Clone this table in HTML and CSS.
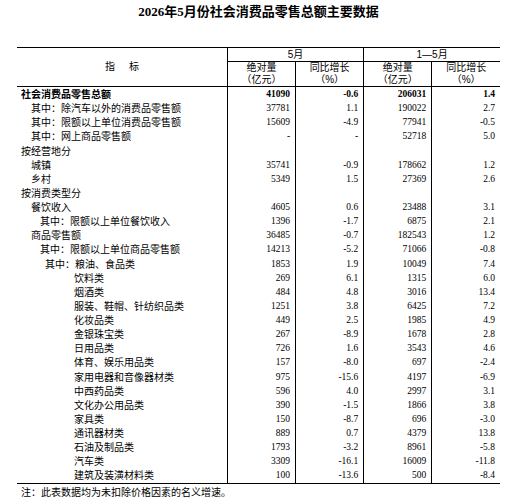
FILE: index.html
```html
<!DOCTYPE html>
<html lang="zh-CN">

<head>
    <meta charset="UTF-8">
    <title>2026年5月份社会消费品零售总额主要数据</title>
    <link rel="stylesheet" href="styles.css">
</head>

<body>
    <h1 class="title">2026年5月份社会消费品零售总额主要数据</h1>

    <table class="data-table">
        <colgroup>
            <col class="col-label">
            <col class="col-num">
            <col class="col-num">
            <col class="col-num">
            <col class="col-num">
        </colgroup>
        <thead>
            <tr class="head-top">
                <th rowspan="2" class="head-label">指&nbsp;&nbsp;&nbsp;&nbsp;&nbsp;标</th>
                <th colspan="2" class="head-group">5月</th>
                <th colspan="2" class="head-group">1—5月</th>
            </tr>
            <tr class="head-sub">
                <th><span class="hl">绝对量</span><span class="hl">（亿元）</span></th>
                <th><span class="hl">同比增长</span><span class="hl">（%）</span></th>
                <th><span class="hl">绝对量</span><span class="hl">（亿元）</span></th>
                <th><span class="hl">同比增长</span><span class="hl">（%）</span></th>
            </tr>
        </thead>
        <tbody>
            <tr class="total">
                <td class="l0">社会消费品零售总额</td>
                <td>41090</td><td>-0.6</td><td>206031</td><td>1.4</td>
            </tr>
            <tr>
                <td class="l1">其中：除汽车以外的消费品零售额</td>
                <td>37781</td><td>1.1</td><td>190022</td><td>2.7</td>
            </tr>
            <tr>
                <td class="l1">其中：限额以上单位消费品零售额</td>
                <td>15609</td><td>-4.9</td><td>77941</td><td>-0.5</td>
            </tr>
            <tr>
                <td class="l1">其中：网上商品零售额</td>
                <td>-</td><td>-</td><td>52718</td><td>5.0</td>
            </tr>
            <tr>
                <td class="l0">按经营地分</td>
                <td></td><td></td><td></td><td></td>
            </tr>
            <tr>
                <td class="l1">城镇</td>
                <td>35741</td><td>-0.9</td><td>178662</td><td>1.2</td>
            </tr>
            <tr>
                <td class="l1">乡村</td>
                <td>5349</td><td>1.5</td><td>27369</td><td>2.6</td>
            </tr>
            <tr>
                <td class="l0">按消费类型分</td>
                <td></td><td></td><td></td><td></td>
            </tr>
            <tr>
                <td class="l1">餐饮收入</td>
                <td>4605</td><td>0.6</td><td>23488</td><td>3.1</td>
            </tr>
            <tr>
                <td class="l2">其中：限额以上单位餐饮收入</td>
                <td>1396</td><td>-1.7</td><td>6875</td><td>2.1</td>
            </tr>
            <tr>
                <td class="l1">商品零售额</td>
                <td>36485</td><td>-0.7</td><td>182543</td><td>1.2</td>
            </tr>
            <tr>
                <td class="l2">其中：限额以上单位商品零售额</td>
                <td>14213</td><td>-5.2</td><td>71066</td><td>-0.8</td>
            </tr>
            <tr>
                <td class="l3">其中：粮油、食品类</td>
                <td>1853</td><td>1.9</td><td>10049</td><td>7.4</td>
            </tr>
            <tr>
                <td class="l4">饮料类</td>
                <td>269</td><td>6.1</td><td>1315</td><td>6.0</td>
            </tr>
            <tr>
                <td class="l4">烟酒类</td>
                <td>484</td><td>4.8</td><td>3016</td><td>13.4</td>
            </tr>
            <tr>
                <td class="l4">服装、鞋帽、针纺织品类</td>
                <td>1251</td><td>3.8</td><td>6425</td><td>7.2</td>
            </tr>
            <tr>
                <td class="l4">化妆品类</td>
                <td>449</td><td>2.5</td><td>1985</td><td>4.9</td>
            </tr>
            <tr>
                <td class="l4">金银珠宝类</td>
                <td>267</td><td>-8.9</td><td>1678</td><td>2.8</td>
            </tr>
            <tr>
                <td class="l4">日用品类</td>
                <td>726</td><td>1.6</td><td>3543</td><td>4.6</td>
            </tr>
            <tr>
                <td class="l4">体育、娱乐用品类</td>
                <td>157</td><td>-8.0</td><td>697</td><td>-2.4</td>
            </tr>
            <tr>
                <td class="l4">家用电器和音像器材类</td>
                <td>975</td><td>-15.6</td><td>4197</td><td>-6.9</td>
            </tr>
            <tr>
                <td class="l4">中西药品类</td>
                <td>596</td><td>4.0</td><td>2997</td><td>3.1</td>
            </tr>
            <tr>
                <td class="l4">文化办公用品类</td>
                <td>390</td><td>-1.5</td><td>1866</td><td>3.8</td>
            </tr>
            <tr>
                <td class="l4">家具类</td>
                <td>150</td><td>-8.7</td><td>696</td><td>-3.0</td>
            </tr>
            <tr>
                <td class="l4">通讯器材类</td>
                <td>889</td><td>0.7</td><td>4379</td><td>13.8</td>
            </tr>
            <tr>
                <td class="l4">石油及制品类</td>
                <td>1793</td><td>-3.2</td><td>8961</td><td>-5.8</td>
            </tr>
            <tr>
                <td class="l4">汽车类</td>
                <td>3309</td><td>-16.1</td><td>16009</td><td>-11.8</td>
            </tr>
            <tr>
                <td class="l4">建筑及装潢材料类</td>
                <td>100</td><td>-13.6</td><td>500</td><td>-8.4</td>
            </tr>
        </tbody>
    </table>

    <p class="note">注：此表数据均为未扣除价格因素的名义增速。</p>
</body>

</html>
```

FILE: styles.css
```css
body {
    margin: 0;
    padding: 0 22px 0 17px;
    background-color: #fff;
    color: #000;
    font-family: "Noto Sans CJK SC", sans-serif;
    font-size: 10px;
}

.title {
    margin: 0;
    height: 24px;
    line-height: 24px;
    text-align: center;
    font-family: "Liberation Serif", "Noto Sans CJK SC", serif;
    font-size: 13px;
    font-weight: bold;
    margin-bottom: 23px;
}

.data-table {
    width: 483px;
    border-collapse: collapse;
    table-layout: fixed;
    border-top: 1px solid #000;
    border-bottom: 1px solid #000;
}

.col-label {
    width: 210px;
}

.col-num {
    width: 68px;
}

.data-table th {
    font-weight: normal;
    padding: 0;
    text-align: center;
    line-height: 12px;
    font-family: "Liberation Sans", "Noto Sans CJK SC", sans-serif;
}

.head-top th {
    height: 13px;
}

.head-group {
    border-left: 1px solid #000;
    border-bottom: 1px solid #000;
}

.head-label {
    border-bottom: 1px solid #000;
}

.head-sub th {
    height: 24px;
    border-left: 1px solid #000;
    border-bottom: 1px solid #000;
}

.hl {
    display: block;
    height: 12px;
}

.data-table td {
    height: 14.14px;
    padding: 0 5px 0 0;
    line-height: 14px;
    white-space: nowrap;
    text-align: right;
    font-family: "Liberation Serif", serif;
    font-size: 9.5px;
    border-left: 1px solid #000;
}

.data-table td.l0,
.data-table td.l1,
.data-table td.l2,
.data-table td.l3,
.data-table td.l4 {
    text-align: left;
    font-family: "Noto Sans CJK SC", sans-serif;
    font-size: 10px;
    border-left: none;
    padding-right: 0;
}

.l0 { padding-left: 4px !important; }
.l1 { padding-left: 14px !important; }
.l2 { padding-left: 23px !important; }
.l3 { padding-left: 28px !important; }
.l4 { padding-left: 57px !important; }

.total td {
    font-weight: bold;
}

.note {
    margin: 0;
    padding-left: 4px;
    line-height: 16px;
    font-size: 10px;
}
```
